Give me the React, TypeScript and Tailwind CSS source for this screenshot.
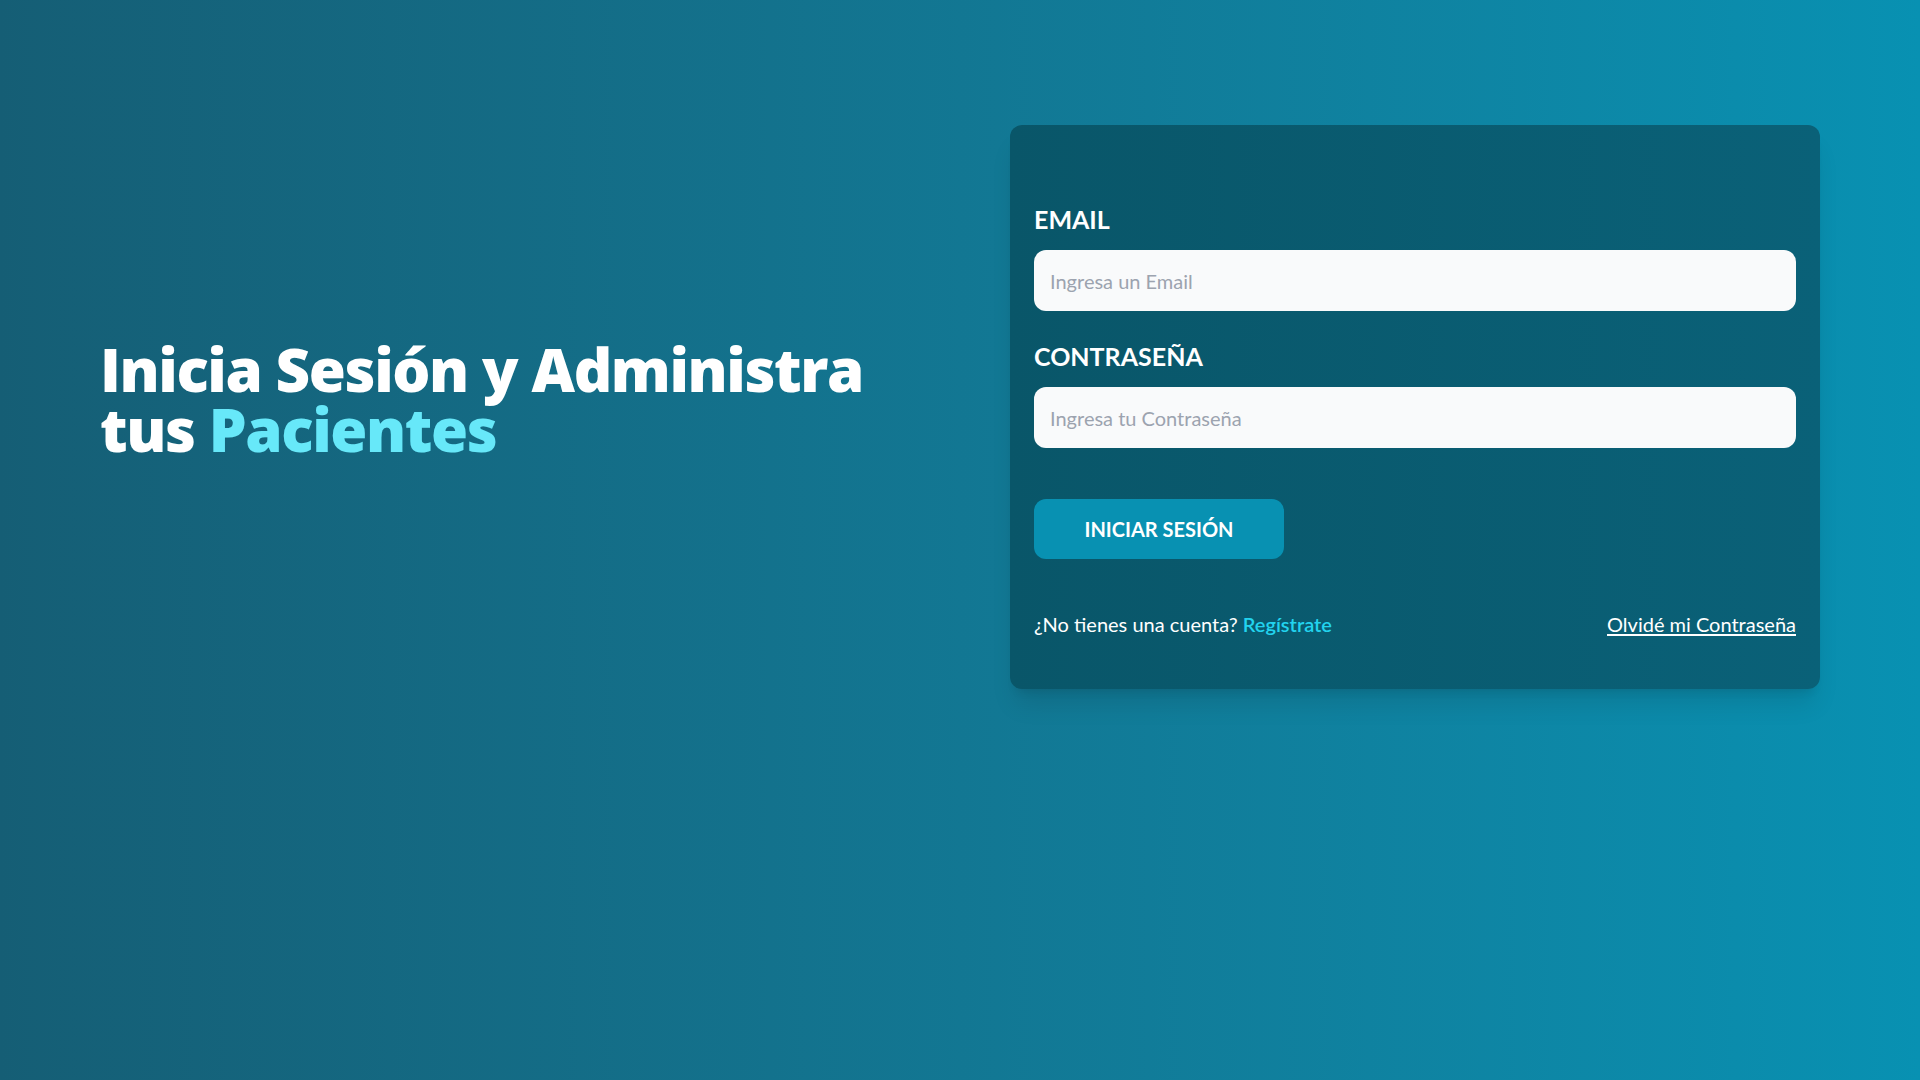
import { useState } from 'react';

const font = { fontFamily: 'Lato, "Noto Sans", sans-serif' };
const headingFont = { fontFamily: '"Open Sans", Lato, sans-serif' };

export default function App() {
  return (
    <div
      className="min-h-screen w-full bg-gradient-to-r from-[#155e75] to-[#0891b2] px-[100px] pt-[125px]"
      style={font}>
      <div className="flex items-center">
        <div className="flex-1 pb-4">
          <Heading />
        </div>
        <LoginForm />
      </div>
    </div>
  );
}

const Heading = () => (
  <h1 className="text-white font-extrabold text-[60px] leading-none tracking-[-1.4px]" style={headingFont}>
    Inicia Sesión y Administra
    <br />
    tus <span className="text-[#67e8f9]">Pacientes</span>
  </h1>
);

const LoginForm = () => {
  const [email, setEmail] = useState('');
  const [password, setPassword] = useState('');

  return (
    <form
      className="w-[810px] rounded-xl bg-gradient-to-r from-[#095669] to-[#0a6178] shadow-xl px-6 pt-[78px] pb-[51px]"
      onSubmit={(e) => e.preventDefault()}>
      <Field
        label="Email"
        type="email"
        placeholder="Ingresa un Email"
        value={email}
        onChange={setEmail}
      />
      <div className="mt-[29px]">
        <Field
          label="Contraseña"
          type="password"
          placeholder="Ingresa tu Contraseña"
          value={password}
          onChange={setPassword}
        />
      </div>

      <button
        type="submit"
        className="mt-[51px] w-[250px] h-[60px] rounded-xl bg-[#0891b2] text-white uppercase font-bold text-xl">
        Iniciar Sesión
      </button>

      <nav className="mt-[51px] flex items-center justify-between text-xl text-white">
        <p>
          ¿No tienes una cuenta?{' '}
          <a href="#" className="text-[#22d3ee] font-semibold">
            Regístrate
          </a>
        </p>
        <a href="#" className="underline underline-offset-2">
          Olvidé mi Contraseña
        </a>
      </nav>
    </form>
  );
};

interface FieldProps {
  label: string;
  type: string;
  placeholder: string;
  value: string;
  onChange: (v: string) => void;
}

const Field = ({ label, type, placeholder, value, onChange }: FieldProps) => (
  <label className="block">
    <span className="block uppercase text-white font-bold text-[25px] leading-8">{label}</span>
    <input
      type={type}
      placeholder={placeholder}
      value={value}
      onChange={(e) => onChange(e.target.value)}
      className="mt-[15px] w-full h-[61px] rounded-xl bg-[#f9fafb] px-4 text-xl text-gray-700 placeholder:text-[#9ca3af] outline-none"
    />
  </label>
);
